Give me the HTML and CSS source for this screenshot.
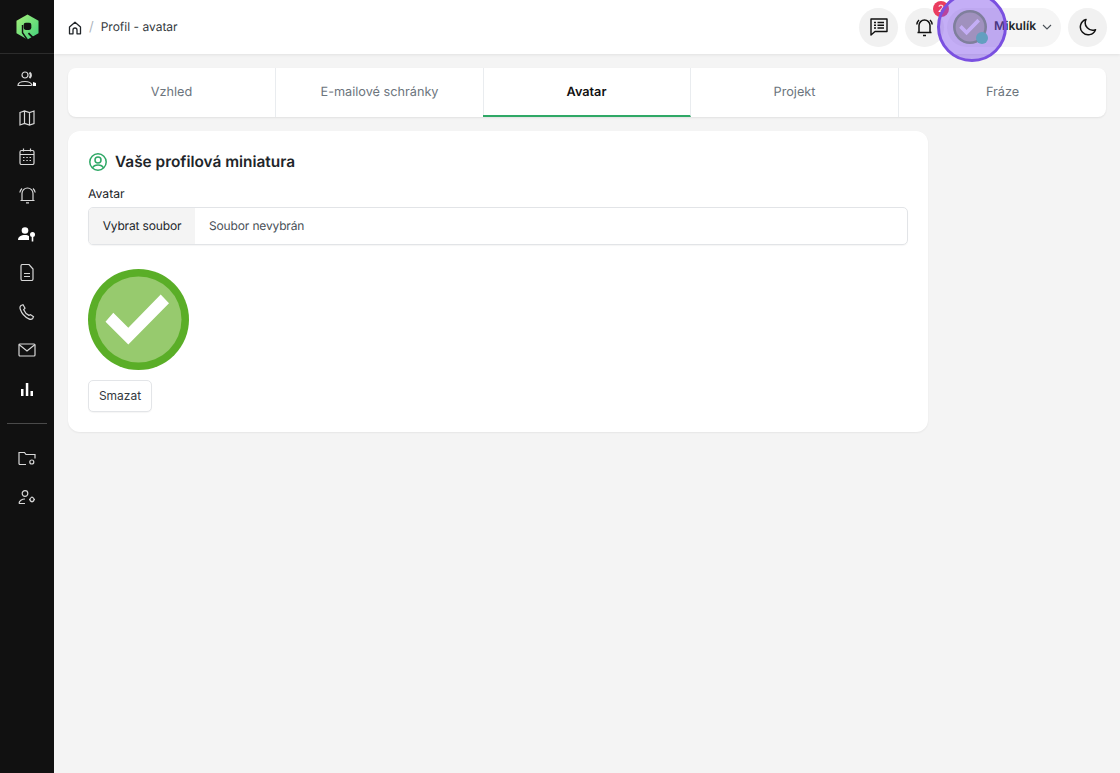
FILE: index.html
```html
<!DOCTYPE html>
<html lang="cs">
<head>
<meta charset="utf-8">
<title>Profil - avatar</title>
<link rel="stylesheet" href="styles.css">
</head>
<body>
<div class="app">
  <aside class="sidebar">
    <div class="logo">
      <svg width="23" height="26" viewBox="0 0 24 26" fill="none">
        <defs><linearGradient id="lg" x1="0" y1="0" x2="1" y2="1"><stop offset="0" stop-color="#a8f07a"/><stop offset="1" stop-color="#3fd07c"/></linearGradient></defs>
        <path d="M12 0 23.500 6.500V19.500L12 26 .5 19.500V6.500Z" fill="url(#lg)"/>
        <rect x="8" y="8.500" width="8" height="7.500" rx="2.200" fill="#111"/>
        <path d="M6.800 11V19L12 26.500" stroke="#111" stroke-width="1.500"/>
        <path d="M13 19.500 19.500 26" stroke="#111" stroke-width="1.800"/>
      </svg>
    </div>
    <nav class="nav">
      <a class="nav-item"><svg width="20" height="16" viewBox="0 0 20 16" class="ico"><circle cx="8" cy="4" r="3"/><path d="M1 14.500c0-3 3-4 7-4s6 1 7 3.500l-1 .5Z"/><path d="M12.500 1.500a3.500 3.500 0 0 1 0 5.500" stroke-width="2.200"/><path d="M16 11l3 1v3h-3Z" fill="#fff" stroke="none"/></svg></a>
      <a class="nav-item"><svg width="16" height="16" viewBox="0 0 16 16" class="ico"><path d="M1 2.500 5.500 1l5 1.500L15 1v12.500L10.500 15l-5-1.500L1 15ZM5.500 1v12.500M10.500 2.500V15"/></svg></a>
      <a class="nav-item"><svg width="16" height="17" viewBox="0 0 16 17" class="ico"><rect x="1" y="2.500" width="14" height="14" rx="1.500"/><path d="M1 6.500h14M4.500.5v3M11.500.5v3"/><path d="M4 9.500h1.500M7.300 9.500h1.500M10.500 9.500H12M4 12.500h1.500M7.300 12.500h1.500M10.500 12.500H12"/></svg></a>
      <a class="nav-item"><svg width="17" height="18" viewBox="0 0 17 18" class="ico"><path d="M3 14.500V7.500a5.500 5.500 0 0 1 11 0v7M1.500 14.500h14M7 16.800h3M.8 6.500a7 7 0 0 1 2.200-4M16.200 6.500a7 7 0 0 0-2.200-4"/></svg></a>
      <a class="nav-item"><svg width="18" height="15" viewBox="0 0 18 15"><circle cx="7" cy="3.500" r="3.300" fill="#fff"/><path d="M0 13c0-3.500 3-5 7-5 2 0 3 .5 4 1v4Z" fill="#fff"/><circle cx="14.500" cy="7.500" r="2.500" fill="#fff"/><path d="M13.700 9h1.600v5.500h-1.600Z" fill="#fff"/></svg></a>
      <a class="nav-item"><svg width="14" height="17" viewBox="0 0 14 17" class="ico"><path d="M1 2a1.500 1.500 0 0 1 1.500-1.500H9L13 5v10a1.500 1.500 0 0 1-1.500 1.500h-9A1.500 1.500 0 0 1 1 15Z"/><path d="M4 9.500h6M4 12.500h6"/></svg></a>
      <a class="nav-item"><svg width="16" height="16" viewBox="0 0 16 16" class="ico"><path d="M2 1.500 4 .8l2 3.400-1.300 1.500c.8 2 2.800 4.500 5.300 5.700l1.500-.8 3 2.200-.8 1.700c-1 1-2.500 1-3.800.4C6 13 2.500 9 1.200 5 .8 3.700 1 2.300 2 1.500Z"/></svg></a>
      <a class="nav-item"><svg width="18" height="14" viewBox="0 0 18 14" class="ico"><rect x="1" y="1" width="16" height="12" rx="1"/><path d="M1 1.500 9 8l8-6.500"/></svg></a>
      <a class="nav-item"><svg width="14" height="14" viewBox="0 0 14 14"><path d="M1 7h2.500v7H1ZM5.800 1h2.500v13H5.800ZM10.500 9H13v5h-2.500Z" fill="#fff"/></svg></a>
    </nav>
    <div class="divider"></div>
    <nav class="nav">
      <a class="nav-item"><svg width="18" height="15" viewBox="0 0 18 15" class="ico"><path d="M8 13.500H2a1 1 0 0 1-1-1V1.500h5.500l1.500 2h9v4"/><circle cx="13.800" cy="11" r="2"/></svg></a>
      <a class="nav-item"><svg width="18" height="15" viewBox="0 0 18 15" class="ico"><circle cx="7" cy="3.500" r="2.800"/><path d="M1 13.500c0-2.500 3-4.500 6-4.500M1 13.500h6"/><circle cx="14" cy="9.500" r="2"/><path d="M14 6.500v1M14 11.500v1M11 9.500h1M16 9.500h1" stroke-width="1.200"/></svg></a>
    </nav>
  </aside>
  <div class="main">
    <header class="topbar">
      <div class="crumbs">
        <svg class="home" width="14" height="14" viewBox="0 0 14 14" fill="none" stroke="#212529" stroke-width="1.300"><path d="M1.500 6 7 1.200 12.500 6v6.800H9V9a2 2 0 0 0-4 0v3.800H1.500Z" stroke-linejoin="round"/></svg>
        <span class="sep">/</span>
        <span class="crumb">Profil - avatar</span>
      </div>
      <div class="actions">
        <button class="circle"><svg width="18" height="18" viewBox="0 0 18 18" fill="none" stroke="#111" stroke-width="1.400"><path d="M1 1h16v12.500H5L1 17Z" stroke-linejoin="round"/><path d="M4 4.500h2M4 7.200h2M4 10h2M7.500 4.500H14M7.500 7.200H14M7.500 10H14"/></svg></button>
        <div class="bell-wrap">
          <button class="circle"><svg width="17" height="19" viewBox="0 0 17 19" fill="none" stroke="#111" stroke-width="1.500"><path d="M3 14.500V7.500a5.500 5.500 0 0 1 11 0v7M1.500 14.500h14M7 17.500h3M.8 6.500a7 7 0 0 1 2.200-4.500M16.200 6.500a7 7 0 0 0-2.200-4.500"/></svg></button>
          <span class="badge">2</span>
        </div>
        <div class="user">
          <svg class="user-avatar" width="34" height="34" viewBox="0 0 33 33"><circle cx="16.500" cy="16.500" r="16.500" fill="#81a95b"/><circle cx="16.500" cy="16.500" r="14" fill="#bdca99"/><path d="M6 17.200 8.400 14.500 13.200 19.300 23.700 8.500 26.200 11.200 13.200 24.500Z" fill="#fff"/></svg>
          <span class="user-name">Mikulík</span>
          <svg width="10" height="6" viewBox="0 0 10 6" fill="none" stroke="#495057" stroke-width="1.100"><path d="m1 1 4 4 4-4"/></svg>
        </div>
        <button class="circle"><svg width="18" height="18" viewBox="0 0 18 18" fill="none" stroke="#111" stroke-width="1.500"><path d="M7 1.500a7.800 7.800 0 1 0 9.500 10.200A7.500 7.500 0 0 1 7 1.500Z" stroke-linejoin="round"/></svg></button>
      </div>
    </header>
    <main class="content">
      <div class="tabs">
        <a class="tab">Vzhled</a>
        <a class="tab">E-mailové schránky</a>
        <a class="tab active">Avatar</a>
        <a class="tab">Projekt</a>
        <a class="tab">Fráze</a>
      </div>
      <section class="card">
        <h2 class="card-title">
          <svg width="20" height="20" viewBox="0 0 20 20" fill="none" stroke="#2fa866" stroke-width="1.500"><circle cx="10" cy="10" r="8.200"/><circle cx="10" cy="8" r="3"/><path d="M4.500 16c1-2.500 3-3 5.500-3s4.500.5 5.500 3"/></svg>
          Vaše profilová miniatura
        </h2>
        <div class="label">Avatar</div>
        <div class="file">
          <span class="file-btn">Vybrat soubor</span>
          <span class="file-name">Soubor nevybrán</span>
        </div>
        <svg class="preview" width="101" height="101" viewBox="0 0 101 101"><circle cx="50.500" cy="50.500" r="50.500" fill="#5aae27"/><circle cx="50.500" cy="50.500" r="43" fill="#97ca6e"/><path d="M17.500 52.700 25.300 43.800 40.300 58.800 72.700 25.500 81 34.300 40.300 75.500Z" fill="#fff"/></svg>
        <button class="delete">Smazat</button>
      </section>
    </main>
  </div>
</div>
<div class="cursor-ring"><span class="cursor-dot"></span></div>
</body>
</html>
```
FILE: styles.css
```css
* { box-sizing: border-box; }
html, body { margin: 0; height: 100%; }
body { font-family: Inter, "Liberation Sans", sans-serif; color: #212529; background: #f4f4f4; overflow: hidden; text-rendering: geometricPrecision; }
button { font-family: inherit; }
.app { display: flex; height: 773px; }
.sidebar { width: 54px; flex: none; background: #111; display: flex; flex-direction: column; align-items: center; }
.logo { height: 54px; width: 100%; display: flex; align-items: center; justify-content: center; border-bottom: 1px solid #2c2c2c; }
.nav { display: flex; flex-direction: column; width: 100%; }
.nav-item { height: 38.800px; display: flex; align-items: center; justify-content: center; }
.sidebar > .nav:nth-of-type(1) { margin-top: 5.500px; }
.ico { fill: none; stroke: #d8d8d8; stroke-width: 1.200; }
.divider { width: 40px; height: 1px; background: #4a4a4a; margin: 14.500px 0 15px; }
.main { flex: 1; min-width: 0; display: flex; flex-direction: column; }
.topbar { height: 54px; background: #fff; display: flex; align-items: center; justify-content: space-between; padding: 0 13px 0 14px; box-shadow: 0 1px 3px rgba(0,0,0,.08); flex: none; }
.crumbs { display: flex; align-items: center; font-size: 12px; line-height: 16px; }
.home { margin-top: 2px; }
.sep { color: #adb5bd; margin: 0 7px; font-size: 13px; }
.crumb { color: #343a40; }
.actions { display: flex; align-items: center; gap: 7px; }
.circle { width: 39px; height: 39px; border: 0; border-radius: 50%; background: #f1f1f1; display: flex; align-items: center; justify-content: center; padding: 0; }
.bell-wrap { position: relative; }
.badge { position: absolute; top: -7px; right: -5px; width: 16px; height: 16px; border-radius: 50%; background: #ea3d5f; color: #fff; font-size: 10px; display: flex; align-items: center; justify-content: center; }
.user { width: 114px; height: 39px; border-radius: 20px; background: #f5f5f5; display: flex; align-items: center; padding-left: 6px; margin-left: -4px; }
.user-avatar { flex: none; }
.user-name { font-size: 12.200px; line-height: 14px; font-weight: 600; margin: 0 6px 2px 7px; }
.content { padding: 14px 14px 0; flex: 1; }
.tabs { display: flex; width: 1038px; height: 49px; background: #fff; border-radius: 8px; box-shadow: 0 1px 2px rgba(0,0,0,.08); overflow: hidden; }
.tab { flex: 1; display: flex; align-items: center; justify-content: center; font-size: 12.700px; color: #6c757d; border-right: 1px solid #e9ecef; }
.tab:last-child { border-right: 0; }
.tab.active { color: #111; font-weight: 600; border-bottom: 2px solid #2fa866; padding-top: 2px; margin-left: -1px; }
.card { width: 860px; height: 301px; margin-top: 14px; background: #fff; border-radius: 12px; padding: 21px 20px 20px; box-shadow: 0 1px 2px rgba(0,0,0,.06); }
.card-title { margin: 0; display: flex; align-items: center; gap: 7px; font-size: 15.400px; font-weight: 600; line-height: 20px; color: #212529; }
.label { font-size: 12.200px; line-height: 16px; margin-top: 14px; color: #212529; }
.file { display: flex; height: 38px; margin-top: 5px; border: 1px solid #e2e4e7; border-radius: 5px; overflow: hidden; font-size: 12px; letter-spacing: -.15px; align-items: stretch; box-shadow: 0 1px 1px rgba(0,0,0,.04); }
.file-btn { width: 106px; background: #f4f4f4; display: flex; align-items: center; justify-content: center; color: #212529; padding-bottom: 1px; }
.file-name { display: flex; align-items: center; padding: 0 0 1px 14px; color: #495057; }
.preview { display: block; margin-top: 24px; }
.delete { display: block; margin-top: 10px; width: 64px; height: 32px; padding: 0 0 1px; background: #fff; border: 1px solid #e3e5e8; border-radius: 5px; font-size: 12px; color: #343a40; box-shadow: 0 1px 1px rgba(0,0,0,.04); }
.cursor-ring { position: absolute; left: 937px; top: -8px; width: 70px; height: 70px; border-radius: 50%; background: rgba(125,75,235,.45); border: 3px solid #7a50e0; }
.cursor-dot { position: absolute; left: 36px; top: 37px; width: 12px; height: 12px; border-radius: 50%; background: #639fc0; }
```
